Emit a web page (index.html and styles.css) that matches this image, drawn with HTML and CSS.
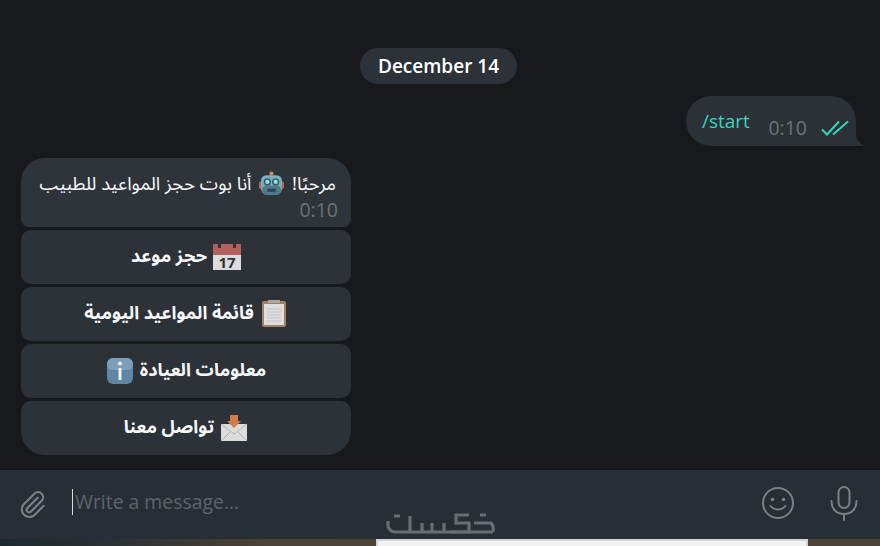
FILE: index.html
```html
<!DOCTYPE html>
<html lang="en">
<head>
<meta charset="utf-8">
<title>Chat</title>
<link rel="stylesheet" href="styles.css">
</head>
<body>
<div class="app">
  <main class="chat">
    <div class="date-row"><span class="date">December 14</span></div>
    <div class="out-row">
      <div class="out-bubble">
        <span class="cmd">/start</span>
        <span class="out-time">0:10</span>
        <svg class="ticks" width="28" height="16" viewBox="0 0 28 16" fill="none" stroke="#38d6c0" stroke-width="2"><path d="M1 9.500l5 5L18 1.500M12 14.500L27 1.500"/></svg>
        <svg class="tail" width="10" height="18" viewBox="0 0 10 18"><path d="M0 0C0 9 3 15 10 18H0z" fill="#2b3137"/></svg>
      </div>
    </div>
    <div class="bot">
      <div class="in-bubble">
        <p class="in-text" dir="rtl">مرحبًا! <svg class="emoji-sm" width="25" height="25" viewBox="0 0 24 24"><circle cx="12" cy="2.500" r="2" fill="#d98a55"/><rect x="0" y="10" width="4" height="7" rx="1.500" fill="#b5694a"/><rect x="20" y="10" width="4" height="7" rx="1.500" fill="#b5694a"/><rect x="2" y="4" width="20" height="18" rx="5" fill="#7fb0bf"/><rect x="3" y="14" width="18" height="9" rx="4" fill="#4f7a88"/><circle cx="8" cy="10.500" r="3.500" fill="#3f5a68"/><circle cx="16" cy="10.500" r="3.500" fill="#3f5a68"/><circle cx="8" cy="10.500" r="2" fill="#7eeaf2"/><circle cx="16" cy="10.500" r="2" fill="#7eeaf2"/><rect x="8" y="17" width="8" height="3" fill="#2f4550"/></svg> أنا بوت حجز المواعيد للطبيب</p>
        <span class="in-time">0:10</span>
      </div>
      <button class="kbd"><svg class="emoji" width="28" height="28" viewBox="0 0 28 28"><rect y="1" width="28" height="26" fill="#dcdcdc"/><rect y="1" width="28" height="11" fill="#b2605c"/><rect x="5" y="0" width="3" height="5" fill="#333"/><rect x="20" y="0" width="3" height="5" fill="#333"/><text x="14" y="25" class="cal-num">17</text></svg><span>حجز موعد</span></button>
      <button class="kbd"><svg class="emoji" width="28" height="28" viewBox="0 0 28 28"><rect x="2" y="1" width="24" height="26" rx="2" fill="#a4825f"/><rect x="4" y="4" width="20" height="21" fill="#dedede"/><rect x="8" y="0" width="12" height="3" fill="#a9a9a9"/><path d="M7 9h14M7 12h14M7 15h14M7 18h14M7 21h14" stroke="#c2c2c2" stroke-width="1.200"/></svg><span>قائمة المواعيد اليومية</span></button>
      <button class="kbd"><span>معلومات العيادة</span><svg class="emoji" width="28" height="28" viewBox="0 0 28 28"><rect x="1" y="1" width="26" height="26" rx="6" fill="#5f86a3"/><rect x="1" y="1" width="26" height="12" rx="6" fill="#7d9fb8"/><circle cx="14" cy="6.500" r="2" fill="#f0f0f0"/><rect x="12.500" y="11" width="3" height="12" fill="#f0f0f0"/></svg></button>
      <button class="kbd kbd-last"><svg class="emoji" width="28" height="28" viewBox="0 0 28 28"><rect x="1" y="10" width="26" height="17" fill="#dcdcdc"/><path d="M1 10l13 10 13-10M1 27l10-10M27 27L17 17" fill="none" stroke="#b4b4b4"/><path d="M10 1h8v6h3l-7 7-7-7h3z" fill="#d07f4c"/></svg><span>تواصل معنا</span></button>
    </div>
  </main>
  <footer class="composer">
    <svg class="attach" width="32" height="32" viewBox="0 0 24 24" fill="none" stroke="#7c7f83" stroke-width="1.600" stroke-linecap="round"><path d="M15.500 6.500l-7.700 7.700a1.900 1.900 0 0 0 2.700 2.700l8-8a3.800 3.800 0 0 0-5.400-5.400l-8.300 8.300a5.700 5.700 0 0 0 8 8l7.200-7.200"/></svg>
    <div class="input"><span class="caret"></span><span class="placeholder">Write a message...</span></div>
    <svg class="smile" width="34" height="34" viewBox="0 0 34 34" fill="none" stroke="#7c7f83" stroke-width="2"><circle cx="17" cy="17" r="15"/><circle cx="11.500" cy="13.500" r="1.800" fill="#7c7f83" stroke="none"/><circle cx="22.500" cy="13.500" r="1.800" fill="#7c7f83" stroke="none"/><path d="M9.500 20c3.500 4.500 11.500 4.500 15 0" stroke-linecap="round"/></svg>
    <svg class="mic" width="28" height="36" viewBox="0 0 28 36" fill="none" stroke="#7c7f83" stroke-width="2" stroke-linecap="round"><rect x="8.500" y="2" width="11" height="21" rx="5.500"/><path d="M1.500 16c0 8 5 13 12.500 13s12.500-5 12.500-13M14 29v6"/></svg>
    <svg class="watermark" width="112" height="30" viewBox="0 0 112 30" fill="none" stroke="#6a6d71" stroke-width="3.200"><path d="M3 13v4a7 7 0 0 0 7 7H108"/><path d="M25 8V24M37 15V24M47 15V24M59 15V24"/><path d="M84 7H71V15H84V24H66"/><path d="M89 15H106Q109 18 108 24"/><path d="M9 8h6M95 7h6"/></svg>
  </footer>
  <div class="strip"><div class="sheet"></div></div>
</div>
</body>
</html>
```
FILE: styles.css
```css
* { box-sizing: border-box; }
html, body { margin: 0; padding: 0; }
body { width: 880px; height: 546px; overflow: hidden; background: #17191d; font-family: "Open Sans", "DejaVu Sans", sans-serif; }
.app { display: flex; flex-direction: column; width: 880px; height: 546px; }
.chat { flex: 1; min-height: 0; display: flex; flex-direction: column; padding: 48px 0 0 21px; }
.date-row { display: flex; justify-content: center; padding-right: 24px; height: 36px; }
.date { display: flex; align-items: center; justify-content: center; width: 157px; height: 36px; border-radius: 18px; background: #2d3239; color: #ffffff; font-size: 19px; font-weight: 600; }
.out-row { display: flex; justify-content: flex-end; padding: 12px 24px 0 0; }
.out-bubble { position: relative; display: flex; width: 170px; height: 50px; padding: 0 0 0 16px; background: #2b3137; border-radius: 25px 25px 0 25px; }
.cmd { color: #38d6c0; font-size: 19px; line-height: 24px; margin-top: 13px; }
.out-time { color: #6b7177; font-size: 19.500px; line-height: 26px; margin: 19px 0 0 18.500px; }
.ticks { margin: 24px 0 0 14px; }
.tail { position: absolute; right: -9px; bottom: 0; }
.bot { display: flex; flex-direction: column; width: 330px; margin-top: 12px; gap: 3px; }
.in-bubble { display: flex; flex-direction: column; height: 69px; padding: 13px 13px 0 13px; background: #2f343b; border-radius: 24px 24px 8px 8px; }
.in-text { margin: 0 2px 0 0; color: #f7f8f9; font-family: "Noto Sans Arabic", "Noto Naskh Arabic", "DejaVu Sans", sans-serif; font-size: 18.500px; line-height: 24px; white-space: nowrap; }
.emoji-sm { vertical-align: -6px; margin: 0 3px; }
.in-time { align-self: flex-end; color: #6b7177; font-size: 19.500px; line-height: 26px; }
.kbd { display: flex; align-items: center; justify-content: center; gap: 6px; height: 54px; border: 0; padding: 0; background: #2d3239; border-radius: 10px; color: #f7f8f9; font-family: "Noto Sans Arabic", "Noto Naskh Arabic", "DejaVu Sans", sans-serif; font-size: 18px; font-weight: 700; direction: rtl; }
.kbd span { margin-bottom: 2px; }
.kbd-last { border-radius: 10px 10px 24px 24px; }
.emoji { flex: none; margin-bottom: 1px; }
.cal-num { font-family: "Open Sans", sans-serif; font-size: 15px; fill: #333; text-anchor: middle; }
.composer { position: relative; display: flex; align-items: center; height: 69px; flex: none; padding: 0 19px 0 17px; background: #282e35; }
.attach { flex: none; }
.input { flex: 1; display: flex; align-items: center; margin-left: 23px; margin-bottom: 6px; }
.caret { width: 1px; height: 26px; background: #d8dadc; margin-right: 2px; }
.placeholder { color: #5d656c; font-size: 19.400px; }
.smile { margin: 0 35px 4px 0; flex: none; }
.mic { flex: none; margin: 0 3px 4px 0; }
.watermark { position: absolute; left: 385px; bottom: 1px; }
.strip { flex: none; height: 7px; background: linear-gradient(90deg, #1c2a30 0, #2a3034 12%, #4c4236 30%, #4b4338 100%); }
.sheet { width: 432px; height: 7px; margin-left: 376px; background: #f2f2f2; border: 2px solid #d4d4d4; border-bottom: 0; }
```
